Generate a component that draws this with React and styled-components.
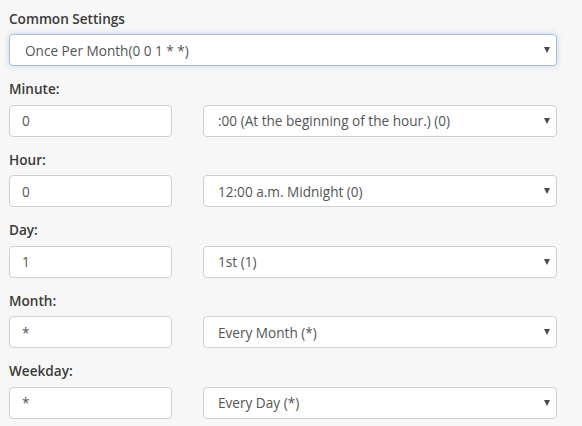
import React from 'react';
import styled, { createGlobalStyle } from 'styled-components';

const GlobalStyle = createGlobalStyle`
  body {
    margin: 0;
    background: #f7f7f7;
    font-family: "Open Sans", "Liberation Sans", sans-serif;
  }
`;

// Outer form column
const Form = styled.div`
  width: 548px;
  padding: 8.5px 0 0 9px;
`;

const Group = styled.div`
  margin-bottom: 13px;
`;

const Label = styled.label`
  display: block;
  font-size: 13.6px;
  font-weight: 600;
  line-height: 19.5px;
  color: #3a3a3a;
  margin-bottom: 6px;
`;

const Row = styled.div`
  display: grid;
  grid-template-columns: 163px 1fr;
  column-gap: 31px;
`;

const TextInput = styled.input`
  box-sizing: border-box;
  width: 100%;
  height: 32px;
  padding: 0 12px;
  border: 1px solid #cfcfcf;
  border-radius: 4px;
  background: #fff;
  font-family: inherit;
  font-size: 13.6px;
  color: #555;
  outline: none;
`;

// Wrapper draws the dropdown caret over the select
const SelectWrap = styled.div`
  position: relative;

  &::after {
    content: '';
    position: absolute;
    right: 7px;
    top: 50%;
    margin-top: -3px;
    border-left: 3.5px solid transparent;
    border-right: 3.5px solid transparent;
    border-top: 6px solid #4a4a4a;
    pointer-events: none;
  }
`;

const Select = styled.select`
  box-sizing: border-box;
  width: 100%;
  height: 32px;
  padding: 0 24px 0 ${p => (p.$focused ? '15px' : '14px')};
  appearance: none;
  border: 1px solid ${p => (p.$focused ? '#a8bed6' : '#cfcfcf')};
  border-radius: 4px;
  background: #fff;
  box-shadow: ${p => (p.$focused ? '0 0 6px rgba(102, 150, 210, 0.35)' : 'none')};
  font-family: inherit;
  font-size: 13.6px;
  color: #555;
  outline: none;
`;

const fields = [
  { label: 'Minute:', value: '0', option: ':00 (At the beginning of the hour.) (0)' },
  { label: 'Hour:', value: '0', option: '12:00 a.m. Midnight (0)' },
  { label: 'Day:', value: '1', option: '1st (1)' },
  { label: 'Month:', value: '*', option: 'Every Month (*)' },
  { label: 'Weekday:', value: '*', option: 'Every Day (*)' },
];

const App = () => {
  return (
    <>
      <GlobalStyle />
      <Form>
        <Group>
          <Label>Common Settings</Label>
          <SelectWrap>
            <Select $focused defaultValue="month">
              <option value="month">Once Per Month(0 0 1 * *)</option>
            </Select>
          </SelectWrap>
        </Group>
        {fields.map(field => (
          <Group key={field.label}>
            <Label>{field.label}</Label>
            <Row>
              <TextInput defaultValue={field.value} />
              <SelectWrap>
                <Select defaultValue={field.option}>
                  <option value={field.option}>{field.option}</option>
                </Select>
              </SelectWrap>
            </Row>
          </Group>
        ))}
      </Form>
    </>
  );
};

export default App;
